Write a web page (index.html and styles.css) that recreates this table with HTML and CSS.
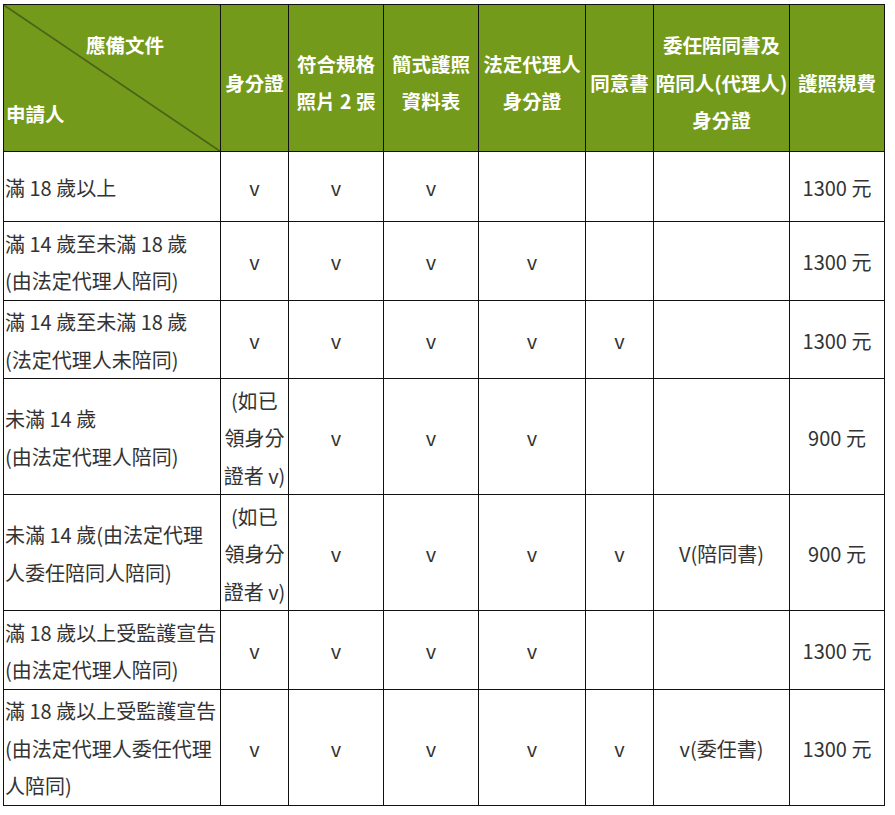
FILE: index.html
```html
<!DOCTYPE html>
<html lang="zh-Hant">
<head>
<meta charset="utf-8">
<title>護照申請應備文件</title>
<link rel="stylesheet" href="styles.css">
</head>
<body>
<table class="req">
  <colgroup>
    <col class="c-who">
    <col class="c-id">
    <col class="c-photo">
    <col class="c-form">
    <col class="c-guard">
    <col class="c-consent">
    <col class="c-proxy">
    <col class="c-fee">
  </colgroup>
  <thead>
    <tr>
      <th class="diag">
        <div class="diag-top">應備文件</div>
        <div class="diag-bottom">申請人</div>
      </th>
      <th>身分證</th>
      <th>符合規格<br>照片 2 張</th>
      <th>簡式護照<br>資料表</th>
      <th>法定代理人<br>身分證</th>
      <th>同意書</th>
      <th>委任陪同書及<br>陪同人(代理人)<br>身分證</th>
      <th>護照規費</th>
    </tr>
  </thead>
  <tbody>
    <tr class="short">
      <td class="who">滿 18 歲以上</td>
      <td>v</td><td>v</td><td>v</td><td></td><td></td><td></td>
      <td>1300 元</td>
    </tr>
    <tr>
      <td class="who">滿 14 歲至未滿 18 歲<br>(由法定代理人陪同)</td>
      <td>v</td><td>v</td><td>v</td><td>v</td><td></td><td></td>
      <td>1300 元</td>
    </tr>
    <tr>
      <td class="who">滿 14 歲至未滿 18 歲<br>(法定代理人未陪同)</td>
      <td>v</td><td>v</td><td>v</td><td>v</td><td>v</td><td></td>
      <td>1300 元</td>
    </tr>
    <tr>
      <td class="who">未滿 14 歲<br>(由法定代理人陪同)</td>
      <td>(如已<br>領身分<br>證者 v)</td><td>v</td><td>v</td><td>v</td><td></td><td></td>
      <td>900 元</td>
    </tr>
    <tr>
      <td class="who">未滿 14 歲(由法定代理<br>人委任陪同人陪同)</td>
      <td>(如已<br>領身分<br>證者 v)</td><td>v</td><td>v</td><td>v</td><td>v</td><td>V(陪同書)</td>
      <td>900 元</td>
    </tr>
    <tr>
      <td class="who">滿 18 歲以上受監護宣告<br>(由法定代理人陪同)</td>
      <td>v</td><td>v</td><td>v</td><td>v</td><td></td><td></td>
      <td>1300 元</td>
    </tr>
    <tr>
      <td class="who">滿 18 歲以上受監護宣告<br>(由法定代理人委任代理<br>人陪同)</td>
      <td>v</td><td>v</td><td>v</td><td>v</td><td>v</td><td>v(委任書)</td>
      <td>1300 元</td>
    </tr>
  </tbody>
</table>
</body>
</html>
```
FILE: styles.css
```css
html, body {
  margin: 0;
  padding: 0;
  background: #fff;
}

body {
  padding: 4px 0 0 3px;
  font-family: "Noto Sans CJK TC", "Noto Sans CJK SC", sans-serif;
  font-size: 20px;
  color: #333;
}

.req {
  border-collapse: collapse;
  table-layout: fixed;
  width: 882px;
}

.c-who { width: 217px; }
.c-id { width: 68px; }
.c-photo { width: 95px; }
.c-form { width: 95px; }
.c-guard { width: 107px; }
.c-consent { width: 68px; }
.c-proxy { width: 136px; }
.c-fee { width: 95px; }

.req th,
.req td {
  border: 1px solid #111;
  vertical-align: middle;
  text-align: center;
  white-space: normal;
}

.req th {
  background: #739a1a;
  color: #fff;
  font-weight: bold;
  font-size: 19.5px;
  line-height: 37.5px;
  padding: 21px 1px 12.5px;
}

.req th.diag {
  vertical-align: top;
  text-align: left;
  padding: 21px 2px 12.5px;
  background: linear-gradient(to top right, rgba(0,0,0,0) calc(50% - 0.7px), #111 50%, rgba(0,0,0,0) calc(50% + 0.7px)), #739a1a;
}

.diag-top {
  padding-left: 80px;
}

.diag-bottom {
  margin-top: 31px;
}

.req td {
  line-height: 37.5px;
  padding: 2.5px 2px 0;
}

.req td.who {
  text-align: left;
  padding-left: 1px;
}

.req tr.short {
  height: 70px;
}
```
